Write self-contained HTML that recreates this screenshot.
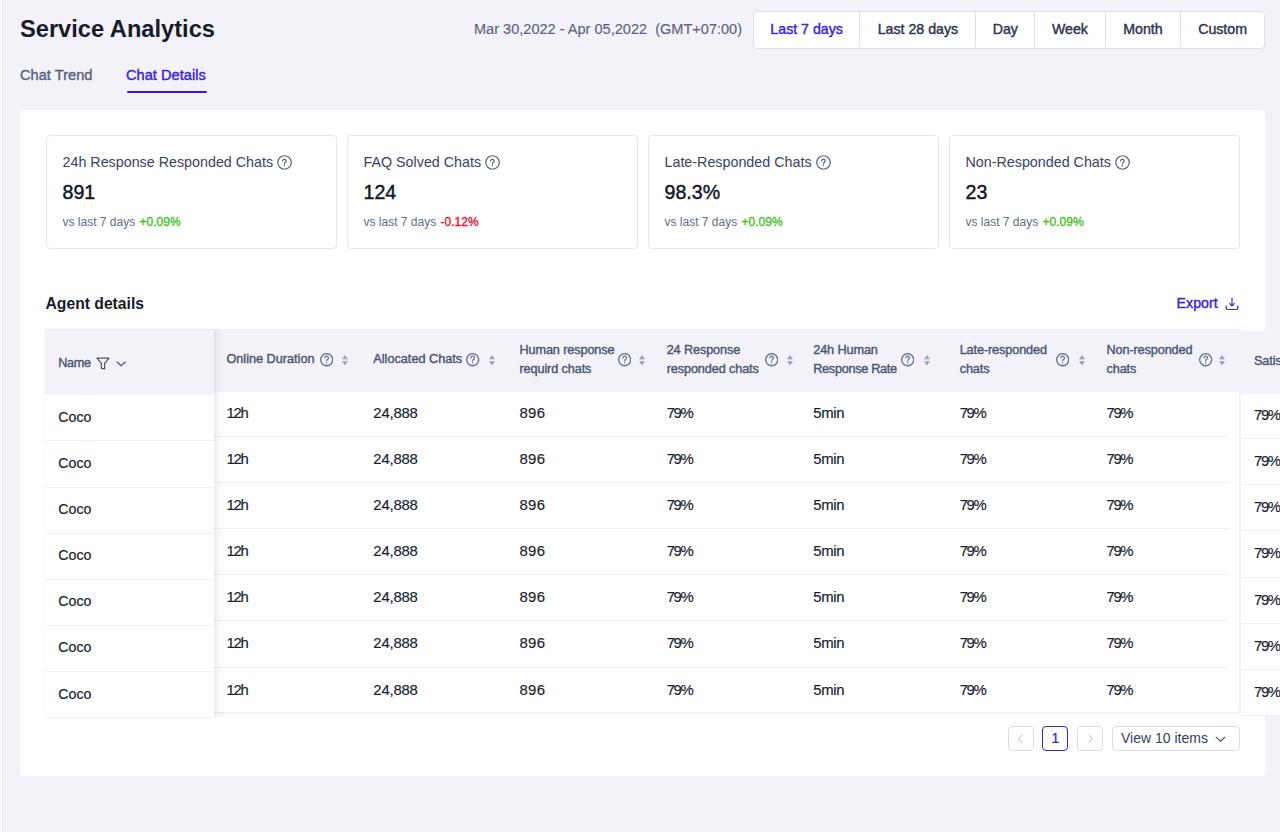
<!DOCTYPE html>
<html>
<head>
<meta charset="utf-8">
<style>
*{box-sizing:border-box;margin:0;padding:0}
html,body{width:1280px;height:832px;overflow:hidden}
body{position:relative;background:#f3f2f8;font-family:"Liberation Sans",sans-serif;color:#1c1e30}
.abs{position:absolute;white-space:nowrap}
#lstrip{position:absolute;left:0;top:0;width:2px;height:832px;background:#fff}
#lline{position:absolute;left:2px;top:0;width:1px;height:832px;background:#e8ecf5}
#title{left:20px;top:14.4px;font-size:23.65px;font-weight:700;color:#171a2b;line-height:30px}
.tab{top:66.4px;font-size:14.65px;font-weight:400;-webkit-text-stroke:0.42px currentColor;line-height:18px}
#tab1{left:20px;color:#5b6282}
#tab2{left:126px;color:#3d22de}
#tabline{position:absolute;left:126.6px;top:90.7px;width:80.8px;height:2px;border-radius:1px;background:#3418dc}
#date{left:474px;top:20.3px;font-size:14.55px;-webkit-text-stroke:0.15px currentColor;color:#5c6380;line-height:18px}
#btns{position:absolute;left:753px;top:11px;height:37.5px;width:512px;background:#fff;border:1px solid #dcdff0;border-radius:4px;display:flex}
#btns div{height:35px;line-height:34px;text-align:center;font-size:14.2px;font-weight:400;-webkit-text-stroke:0.42px currentColor;color:#2f3451;border-left:1px solid #dcdff0}
#btns div:first-child{border-left:none;color:#3d22de}
#card{position:absolute;left:20px;top:110px;width:1245px;height:666px;background:#fff;border-radius:4px}
.stat{position:absolute;top:135px;width:291.5px;height:113.5px;border:1px solid #e5e6ef;border-radius:4px;background:#fff}
.stat .t{position:absolute;left:16px;top:17px;font-size:14.3px;color:#3b4262;line-height:18px;white-space:nowrap}
.stat .v{position:absolute;left:16px;top:44px;font-size:19.6px;font-weight:400;-webkit-text-stroke:0.45px currentColor;color:#13152a;line-height:24px}
.stat .c{position:absolute;left:16px;top:78px;font-size:12px;color:#646b87;line-height:16px;white-space:nowrap}
.g{color:#3fc21a;-webkit-text-stroke:0.35px currentColor;margin-left:1px}
.r{color:#e8112c;-webkit-text-stroke:0.35px currentColor;margin-left:1px}
.q{display:inline-block;vertical-align:top;position:relative;top:2.2px}
.th{position:absolute;white-space:nowrap;font-size:12.7px;font-weight:400;-webkit-text-stroke:0.4px #4c5475;letter-spacing:-0.12px;color:#4c5475;line-height:16px}
.td{position:absolute;white-space:nowrap;font-size:14.9px;-webkit-text-stroke:0.2px currentColor;color:#1d1f31;line-height:18px}
.hl{position:absolute;height:1px;background:#eef0f6}
.ic{position:absolute;display:block}
.pg{position:absolute;top:726px;width:26px;height:25px;border:1px solid #d9ddf1;border-radius:4px;background:#fff;font-size:14px;font-weight:400;-webkit-text-stroke:0.2px currentColor;color:#3418dc;text-align:center;line-height:23px}
.pg svg{display:block;margin:0 auto}
.pg.act{border:1.5px solid #3d22de;line-height:22px}
#sel{position:absolute;left:1112px;top:726px;width:128px;height:25px;border:1px solid #d9ddf1;border-radius:4px;background:#fff;font-size:14px;color:#3b4160;line-height:23px;padding-left:8px}
#agent{left:45.5px;top:294.2px;font-size:15.7px;font-weight:700;color:#171a2b;line-height:20px}
#export{left:1176.6px;top:295px;font-size:14.2px;font-weight:400;-webkit-text-stroke:0.42px currentColor;color:#3d22de;line-height:16px}
</style>
</head>
<body>
<div id="lstrip"></div><div id="lline"></div>
<div class="abs" id="title">Service Analytics</div>
<div class="abs tab" id="tab1">Chat Trend</div>
<div class="abs tab" id="tab2">Chat Details</div>
<div id="tabline"></div>
<div class="abs" id="date">Mar 30,2022 - Apr 05,2022&nbsp; (GMT+07:00)</div>
<div id="btns">
  <div style="width:105.3px">Last 7 days</div>
  <div style="width:116.2px">Last 28 days</div>
  <div style="width:58.7px">Day</div>
  <div style="width:70.5px">Week</div>
  <div style="width:75.5px">Month</div>
  <div style="flex:1">Custom</div>
</div>
<div id="card"></div>

<div class="stat" style="left:45.5px">
  <div class="t">24h Response Responded Chats <svg class="q" width="15" height="15" viewBox="0 0 14 14"><circle cx="7" cy="7" r="6.3" fill="none" stroke="#5f6686" stroke-width="1.15"/><path d="M5.3 5.6a1.6 1.6 0 1 1 2.45 1.35c-.45.28-.75.58-.75 1.1v.15" fill="none" stroke="#5f6686" stroke-width="1.2" stroke-linecap="round"/><circle cx="7" cy="9.75" r=".68" fill="#5f6686"/></svg></div>
  <div class="v">891</div>
  <div class="c">vs last 7 days <span class="g">+0.09%</span></div>
</div>
<div class="stat" style="left:346.5px">
  <div class="t">FAQ Solved Chats <svg class="q" width="15" height="15" viewBox="0 0 14 14"><circle cx="7" cy="7" r="6.3" fill="none" stroke="#5f6686" stroke-width="1.15"/><path d="M5.3 5.6a1.6 1.6 0 1 1 2.45 1.35c-.45.28-.75.58-.75 1.1v.15" fill="none" stroke="#5f6686" stroke-width="1.2" stroke-linecap="round"/><circle cx="7" cy="9.75" r=".68" fill="#5f6686"/></svg></div>
  <div class="v">124</div>
  <div class="c">vs last 7 days <span class="r">-0.12%</span></div>
</div>
<div class="stat" style="left:647.5px">
  <div class="t">Late-Responded Chats <svg class="q" width="15" height="15" viewBox="0 0 14 14"><circle cx="7" cy="7" r="6.3" fill="none" stroke="#5f6686" stroke-width="1.15"/><path d="M5.3 5.6a1.6 1.6 0 1 1 2.45 1.35c-.45.28-.75.58-.75 1.1v.15" fill="none" stroke="#5f6686" stroke-width="1.2" stroke-linecap="round"/><circle cx="7" cy="9.75" r=".68" fill="#5f6686"/></svg></div>
  <div class="v">98.3%</div>
  <div class="c">vs last 7 days <span class="g">+0.09%</span></div>
</div>
<div class="stat" style="left:948.5px">
  <div class="t">Non-Responded Chats <svg class="q" width="15" height="15" viewBox="0 0 14 14"><circle cx="7" cy="7" r="6.3" fill="none" stroke="#5f6686" stroke-width="1.15"/><path d="M5.3 5.6a1.6 1.6 0 1 1 2.45 1.35c-.45.28-.75.58-.75 1.1v.15" fill="none" stroke="#5f6686" stroke-width="1.2" stroke-linecap="round"/><circle cx="7" cy="9.75" r=".68" fill="#5f6686"/></svg></div>
  <div class="v">23</div>
  <div class="c">vs last 7 days <span class="g">+0.09%</span></div>
</div>

<div class="abs" id="agent">Agent details</div>
<div class="abs" id="export">Export</div>
<svg class="ic" style="left:1225px;top:296.5px" width="14" height="14" viewBox="0 0 14 14"><path d="M7 .7V8.7M4.3 6.1L7 8.8L9.7 6.1" fill="none" stroke="#3d22de" stroke-width="1.2"/><path d="M1.1 8.4V10.8A1.7 1.7 0 0 0 2.8 12.5H11.2A1.7 1.7 0 0 0 12.9 10.8V8.4" fill="none" stroke="#3d22de" stroke-width="1.2"/></svg>

<div id="mt" style="position:absolute;left:214px;top:328.7px;width:1025.5px;height:384.60px;background:#fff;border-radius:0 4px 4px 0;border-right:1px solid #eff0f6;border-bottom:1px solid #eceef5;box-shadow:0 1px 2px rgba(40,40,90,.04)"></div>
<div style="position:absolute;left:214px;top:328.7px;width:1025.5px;height:63.10px;background:#f3f2f8;border-radius:0 4px 0 0"></div>
<div class="hl" style="left:214px;top:435.75px;width:1013.5px"></div>
<div class="hl" style="left:214px;top:481.90px;width:1013.5px"></div>
<div class="hl" style="left:214px;top:528.05px;width:1013.5px"></div>
<div class="hl" style="left:214px;top:574.20px;width:1013.5px"></div>
<div class="hl" style="left:214px;top:620.35px;width:1013.5px"></div>
<div class="hl" style="left:214px;top:666.50px;width:1013.5px"></div>
<div class="th" style="left:226.4px;top:351.4px;letter-spacing:0px">Online Duration</div>
<svg class="ic" style="left:319.7px;top:353.15000000000003px" width="13.4" height="13.4" viewBox="0 0 14 14"><circle cx="7" cy="7" r="6.3" fill="none" stroke="#687090" stroke-width="1.41"/><path d="M5.15 5.1a1.85 1.85 0 1 1 2.6 1.7c-.5.28-.75.6-.75 1.2v.25" fill="none" stroke="#687090" stroke-width="1.3" stroke-linecap="round"/><circle cx="7" cy="10.4" r=".75" fill="#687090"/></svg>
<svg class="ic" style="left:342.4px;top:354.8px" width="6" height="10.5" viewBox="0 0 6 10.5"><path d="M3 0L6 4.2H0Z M0 6.3H6L3 10.5Z" fill="#9aa1bb"/></svg>
<div class="th" style="left:373.3px;top:351.4px;letter-spacing:0px">Allocated Chats</div>
<svg class="ic" style="left:466.2px;top:353.15000000000003px" width="13.4" height="13.4" viewBox="0 0 14 14"><circle cx="7" cy="7" r="6.3" fill="none" stroke="#687090" stroke-width="1.41"/><path d="M5.15 5.1a1.85 1.85 0 1 1 2.6 1.7c-.5.28-.75.6-.75 1.2v.25" fill="none" stroke="#687090" stroke-width="1.3" stroke-linecap="round"/><circle cx="7" cy="10.4" r=".75" fill="#687090"/></svg>
<svg class="ic" style="left:488.6px;top:354.8px" width="6" height="10.5" viewBox="0 0 6 10.5"><path d="M3 0L6 4.2H0Z M0 6.3H6L3 10.5Z" fill="#9aa1bb"/></svg>
<div class="th" style="left:519.5px;top:341.9px">Human response</div>
<div class="th" style="left:519.5px;top:360.6px;">requird chats</div>
<svg class="ic" style="left:618.0px;top:353.15000000000003px" width="13.4" height="13.4" viewBox="0 0 14 14"><circle cx="7" cy="7" r="6.3" fill="none" stroke="#687090" stroke-width="1.41"/><path d="M5.15 5.1a1.85 1.85 0 1 1 2.6 1.7c-.5.28-.75.6-.75 1.2v.25" fill="none" stroke="#687090" stroke-width="1.3" stroke-linecap="round"/><circle cx="7" cy="10.4" r=".75" fill="#687090"/></svg>
<svg class="ic" style="left:638.8px;top:354.8px" width="6" height="10.5" viewBox="0 0 6 10.5"><path d="M3 0L6 4.2H0Z M0 6.3H6L3 10.5Z" fill="#9aa1bb"/></svg>
<div class="th" style="left:666.7px;top:341.9px">24 Response</div>
<div class="th" style="left:666.7px;top:360.6px;">responded chats</div>
<svg class="ic" style="left:764.7px;top:353.15000000000003px" width="13.4" height="13.4" viewBox="0 0 14 14"><circle cx="7" cy="7" r="6.3" fill="none" stroke="#687090" stroke-width="1.41"/><path d="M5.15 5.1a1.85 1.85 0 1 1 2.6 1.7c-.5.28-.75.6-.75 1.2v.25" fill="none" stroke="#687090" stroke-width="1.3" stroke-linecap="round"/><circle cx="7" cy="10.4" r=".75" fill="#687090"/></svg>
<svg class="ic" style="left:787.3px;top:354.8px" width="6" height="10.5" viewBox="0 0 6 10.5"><path d="M3 0L6 4.2H0Z M0 6.3H6L3 10.5Z" fill="#9aa1bb"/></svg>
<div class="th" style="left:813.25px;top:341.9px">24h Human</div>
<div class="th" style="left:813.25px;top:360.6px;letter-spacing:-0.3px;">Response Rate</div>
<svg class="ic" style="left:900.9px;top:353.15000000000003px" width="13.4" height="13.4" viewBox="0 0 14 14"><circle cx="7" cy="7" r="6.3" fill="none" stroke="#687090" stroke-width="1.41"/><path d="M5.15 5.1a1.85 1.85 0 1 1 2.6 1.7c-.5.28-.75.6-.75 1.2v.25" fill="none" stroke="#687090" stroke-width="1.3" stroke-linecap="round"/><circle cx="7" cy="10.4" r=".75" fill="#687090"/></svg>
<svg class="ic" style="left:923.8px;top:354.8px" width="6" height="10.5" viewBox="0 0 6 10.5"><path d="M3 0L6 4.2H0Z M0 6.3H6L3 10.5Z" fill="#9aa1bb"/></svg>
<div class="th" style="left:959.7px;top:341.9px">Late-responded</div>
<div class="th" style="left:959.7px;top:360.6px;">chats</div>
<svg class="ic" style="left:1056.0px;top:353.15000000000003px" width="13.4" height="13.4" viewBox="0 0 14 14"><circle cx="7" cy="7" r="6.3" fill="none" stroke="#687090" stroke-width="1.41"/><path d="M5.15 5.1a1.85 1.85 0 1 1 2.6 1.7c-.5.28-.75.6-.75 1.2v.25" fill="none" stroke="#687090" stroke-width="1.3" stroke-linecap="round"/><circle cx="7" cy="10.4" r=".75" fill="#687090"/></svg>
<svg class="ic" style="left:1078.7px;top:354.8px" width="6" height="10.5" viewBox="0 0 6 10.5"><path d="M3 0L6 4.2H0Z M0 6.3H6L3 10.5Z" fill="#9aa1bb"/></svg>
<div class="th" style="left:1106.5px;top:341.9px">Non-responded</div>
<div class="th" style="left:1106.5px;top:360.6px;">chats</div>
<svg class="ic" style="left:1199.3px;top:353.15000000000003px" width="13.4" height="13.4" viewBox="0 0 14 14"><circle cx="7" cy="7" r="6.3" fill="none" stroke="#687090" stroke-width="1.41"/><path d="M5.15 5.1a1.85 1.85 0 1 1 2.6 1.7c-.5.28-.75.6-.75 1.2v.25" fill="none" stroke="#687090" stroke-width="1.3" stroke-linecap="round"/><circle cx="7" cy="10.4" r=".75" fill="#687090"/></svg>
<svg class="ic" style="left:1219.4px;top:354.8px" width="6" height="10.5" viewBox="0 0 6 10.5"><path d="M3 0L6 4.2H0Z M0 6.3H6L3 10.5Z" fill="#9aa1bb"/></svg>
<div class="td" style="left:226.4px;top:403.70px;letter-spacing:-1.2px">12h</div>
<div class="td" style="left:373.3px;top:403.70px;letter-spacing:-0.2px">24,888</div>
<div class="td" style="left:519.5px;top:403.70px;letter-spacing:0.3px">896</div>
<div class="td" style="left:666.7px;top:403.70px;letter-spacing:-1.4px">79%</div>
<div class="td" style="left:813.25px;top:403.70px;letter-spacing:-0.35px">5min</div>
<div class="td" style="left:959.7px;top:403.70px;letter-spacing:-1.4px">79%</div>
<div class="td" style="left:1106.5px;top:403.70px;letter-spacing:-1.4px">79%</div>
<div class="td" style="left:226.4px;top:449.85px;letter-spacing:-1.2px">12h</div>
<div class="td" style="left:373.3px;top:449.85px;letter-spacing:-0.2px">24,888</div>
<div class="td" style="left:519.5px;top:449.85px;letter-spacing:0.3px">896</div>
<div class="td" style="left:666.7px;top:449.85px;letter-spacing:-1.4px">79%</div>
<div class="td" style="left:813.25px;top:449.85px;letter-spacing:-0.35px">5min</div>
<div class="td" style="left:959.7px;top:449.85px;letter-spacing:-1.4px">79%</div>
<div class="td" style="left:1106.5px;top:449.85px;letter-spacing:-1.4px">79%</div>
<div class="td" style="left:226.4px;top:496.00px;letter-spacing:-1.2px">12h</div>
<div class="td" style="left:373.3px;top:496.00px;letter-spacing:-0.2px">24,888</div>
<div class="td" style="left:519.5px;top:496.00px;letter-spacing:0.3px">896</div>
<div class="td" style="left:666.7px;top:496.00px;letter-spacing:-1.4px">79%</div>
<div class="td" style="left:813.25px;top:496.00px;letter-spacing:-0.35px">5min</div>
<div class="td" style="left:959.7px;top:496.00px;letter-spacing:-1.4px">79%</div>
<div class="td" style="left:1106.5px;top:496.00px;letter-spacing:-1.4px">79%</div>
<div class="td" style="left:226.4px;top:542.15px;letter-spacing:-1.2px">12h</div>
<div class="td" style="left:373.3px;top:542.15px;letter-spacing:-0.2px">24,888</div>
<div class="td" style="left:519.5px;top:542.15px;letter-spacing:0.3px">896</div>
<div class="td" style="left:666.7px;top:542.15px;letter-spacing:-1.4px">79%</div>
<div class="td" style="left:813.25px;top:542.15px;letter-spacing:-0.35px">5min</div>
<div class="td" style="left:959.7px;top:542.15px;letter-spacing:-1.4px">79%</div>
<div class="td" style="left:1106.5px;top:542.15px;letter-spacing:-1.4px">79%</div>
<div class="td" style="left:226.4px;top:588.30px;letter-spacing:-1.2px">12h</div>
<div class="td" style="left:373.3px;top:588.30px;letter-spacing:-0.2px">24,888</div>
<div class="td" style="left:519.5px;top:588.30px;letter-spacing:0.3px">896</div>
<div class="td" style="left:666.7px;top:588.30px;letter-spacing:-1.4px">79%</div>
<div class="td" style="left:813.25px;top:588.30px;letter-spacing:-0.35px">5min</div>
<div class="td" style="left:959.7px;top:588.30px;letter-spacing:-1.4px">79%</div>
<div class="td" style="left:1106.5px;top:588.30px;letter-spacing:-1.4px">79%</div>
<div class="td" style="left:226.4px;top:634.45px;letter-spacing:-1.2px">12h</div>
<div class="td" style="left:373.3px;top:634.45px;letter-spacing:-0.2px">24,888</div>
<div class="td" style="left:519.5px;top:634.45px;letter-spacing:0.3px">896</div>
<div class="td" style="left:666.7px;top:634.45px;letter-spacing:-1.4px">79%</div>
<div class="td" style="left:813.25px;top:634.45px;letter-spacing:-0.35px">5min</div>
<div class="td" style="left:959.7px;top:634.45px;letter-spacing:-1.4px">79%</div>
<div class="td" style="left:1106.5px;top:634.45px;letter-spacing:-1.4px">79%</div>
<div class="td" style="left:226.4px;top:680.60px;letter-spacing:-1.2px">12h</div>
<div class="td" style="left:373.3px;top:680.60px;letter-spacing:-0.2px">24,888</div>
<div class="td" style="left:519.5px;top:680.60px;letter-spacing:0.3px">896</div>
<div class="td" style="left:666.7px;top:680.60px;letter-spacing:-1.4px">79%</div>
<div class="td" style="left:813.25px;top:680.60px;letter-spacing:-0.35px">5min</div>
<div class="td" style="left:959.7px;top:680.60px;letter-spacing:-1.4px">79%</div>
<div class="td" style="left:1106.5px;top:680.60px;letter-spacing:-1.4px">79%</div>
<div style="position:absolute;left:1241px;top:331.0px;width:60px;height:384.3px;background:#fff"></div>
<div style="position:absolute;left:1239.3px;top:328.7px;width:1.7px;height:385.3px;background:#f0f2f8"></div>
<div style="position:absolute;left:1241px;top:331.0px;width:60px;height:62.5px;background:#f3f2f8"></div>
<div class="th" style="left:1254px;top:353.3px">Satisfaction</div>
<div class="hl" style="left:1241px;top:438.05px;width:60px"></div>
<div class="hl" style="left:1241px;top:484.20px;width:60px"></div>
<div class="hl" style="left:1241px;top:530.35px;width:60px"></div>
<div class="hl" style="left:1241px;top:576.50px;width:60px"></div>
<div class="hl" style="left:1241px;top:622.65px;width:60px"></div>
<div class="hl" style="left:1241px;top:668.80px;width:60px"></div>
<div class="hl" style="left:1241px;top:714.95px;width:60px"></div>
<div class="td" style="left:1254px;top:406.00px;letter-spacing:-1.4px">79%</div>
<div class="td" style="left:1254px;top:452.15px;letter-spacing:-1.4px">79%</div>
<div class="td" style="left:1254px;top:498.30px;letter-spacing:-1.4px">79%</div>
<div class="td" style="left:1254px;top:544.45px;letter-spacing:-1.4px">79%</div>
<div class="td" style="left:1254px;top:590.60px;letter-spacing:-1.4px">79%</div>
<div class="td" style="left:1254px;top:636.75px;letter-spacing:-1.4px">79%</div>
<div class="td" style="left:1254px;top:682.90px;letter-spacing:-1.4px">79%</div>
<div style="position:absolute;left:45px;top:328.7px;width:169px;height:388.8px;background:#fff;box-shadow:0 1px 3px rgba(40,40,90,.06)"></div>
<div style="position:absolute;left:214px;top:328.7px;width:12px;height:388.8px;background:linear-gradient(90deg,rgba(30,30,60,.065),rgba(30,30,60,.025) 45%,rgba(30,30,60,0))"></div>
<div style="position:absolute;left:45px;top:328.7px;width:169px;height:66.30000000000001px;background:#f3f2f8;border-top:1.5px solid #ecebf3"></div>
<div class="th" style="left:58.3px;top:355.2px;letter-spacing:-0.35px">Name</div>
<svg class="ic" style="left:95.5px;top:356.7px" width="14" height="13" viewBox="0 0 14 13"><path d="M1 1.1H13L8.6 6.4V11.9L5.4 11.3V6.4Z" fill="none" stroke="#4d5577" stroke-width="1.25" stroke-linejoin="round"/></svg>
<svg class="ic" style="left:115.8px;top:360.5px" width="11" height="6" viewBox="0 0 11 6"><path d="M.7 .7L5.1 4.7L9.6 .7" fill="none" stroke="#4d5577" stroke-width="1.3"/></svg>
<div class="hl" style="left:45px;top:440.35px;width:169px"></div>
<div class="hl" style="left:45px;top:486.50px;width:169px"></div>
<div class="hl" style="left:45px;top:532.65px;width:169px"></div>
<div class="hl" style="left:45px;top:578.80px;width:169px"></div>
<div class="hl" style="left:45px;top:624.95px;width:169px"></div>
<div class="hl" style="left:45px;top:671.10px;width:169px"></div>
<div class="hl" style="left:45px;top:717.25px;width:169px"></div>
<div class="td" style="left:58.3px;top:407.70px;font-size:14.2px">Coco</div>
<div class="td" style="left:58.3px;top:453.85px;font-size:14.2px">Coco</div>
<div class="td" style="left:58.3px;top:500.00px;font-size:14.2px">Coco</div>
<div class="td" style="left:58.3px;top:546.15px;font-size:14.2px">Coco</div>
<div class="td" style="left:58.3px;top:592.30px;font-size:14.2px">Coco</div>
<div class="td" style="left:58.3px;top:638.45px;font-size:14.2px">Coco</div>
<div class="td" style="left:58.3px;top:684.60px;font-size:14.2px">Coco</div>
<div class="pg" style="left:1007.5px"><svg width="24" height="24" viewBox="0 0 24 24"><path d="M13.3 7.6L9.6 11.7L13.3 15.8" fill="none" stroke="#c5cae0" stroke-width="1.1"/></svg></div>
<div class="pg act" style="left:1042.3px">1</div>
<div class="pg" style="left:1077.2px"><svg width="24" height="24" viewBox="0 0 24 24"><path d="M10.7 7.6L14.4 11.7L10.7 15.8" fill="none" stroke="#c5cae0" stroke-width="1.1"/></svg></div>
<div id="sel"><span>View 10 items</span><svg style="position:absolute;left:102px;top:9px" width="11" height="7" viewBox="0 0 11 7"><path d="M.8 .8L5.5 5.2L10.2 .8" fill="none" stroke="#3f4563" stroke-width="1.1"/></svg></div>
</body></html>
